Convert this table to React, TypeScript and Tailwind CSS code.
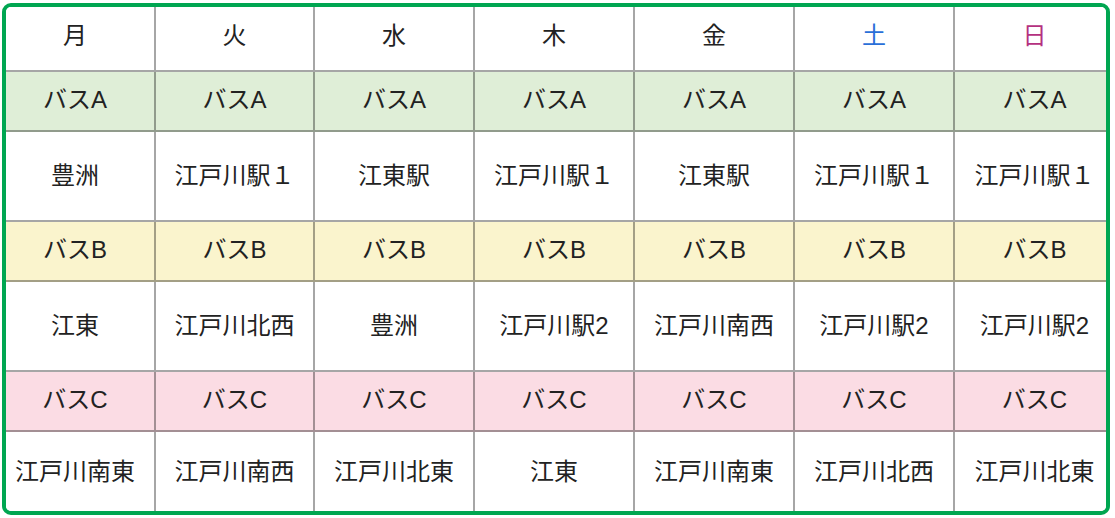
const days = [
  { label: "月", color: "text-[#222222]" },
  { label: "火", color: "text-[#222222]" },
  { label: "水", color: "text-[#222222]" },
  { label: "木", color: "text-[#222222]" },
  { label: "金", color: "text-[#222222]" },
  { label: "土", color: "text-[#2a6fd8]" },
  { label: "日", color: "text-[#b5317f]" },
];

type Row = { cells: string[]; bg: string; h: string };

const rows: Row[] = [
  { cells: days.map(() => "バスA"), bg: "bg-[#dfeed7]", h: "h-[60px]" },
  {
    cells: ["豊洲", "江戸川駅１", "江東駅", "江戸川駅１", "江東駅", "江戸川駅１", "江戸川駅１"],
    bg: "bg-white",
    h: "h-[90px]",
  },
  { cells: days.map(() => "バスB"), bg: "bg-[#faf4cd]", h: "h-[60px]" },
  {
    cells: ["江東", "江戸川北西", "豊洲", "江戸川駅2", "江戸川南西", "江戸川駅2", "江戸川駅2"],
    bg: "bg-white",
    h: "h-[90px]",
  },
  { cells: days.map(() => "バスC"), bg: "bg-[#fbdce4]", h: "h-[60px]" },
  {
    cells: ["江戸川南東", "江戸川南西", "江戸川北東", "江東", "江戸川南東", "江戸川北西", "江戸川北東"],
    bg: "bg-white",
    h: "h-[79px]",
  },
];

const edgePad = (col: number) => (col === 0 ? "pr-[10px]" : col === 6 ? "pl-[8px]" : "");

function Cell({
  children,
  col,
  last,
  className,
}: {
  children: React.ReactNode;
  col: number;
  last: boolean;
  className: string;
}) {
  return (
    <div
      className={`flex items-center justify-center border-black/35 ${col < 6 ? "border-r-2" : ""} ${
        last ? "" : "border-b-2"
      } ${edgePad(col)} ${className}`}
    >
      {children}
    </div>
  );
}

export default function App() {
  return (
    <div
      className="bg-white w-[1115px] h-[518px] pt-[3px] pl-[2px]"
      style={{ fontFamily: '"Liberation Sans", "Noto Sans CJK JP", sans-serif' }}
    >
      <div className="w-[1108px] h-[512px] rounded-[9px] border-4 border-[#00a651] overflow-hidden">
        <div className="grid grid-cols-[150px_159px_160px_160px_160px_160px_151px] text-[24px] leading-none text-[#222222]">
          {days.map((d, i) => (
            <Cell key={d.label} col={i} last={false} className={`h-[65px] pb-[6px] bg-white ${d.color}`}>
              {d.label}
            </Cell>
          ))}
          {rows.map((r, ri) =>
            r.cells.map((c, ci) => (
              <Cell
                key={`${ri}-${ci}`}
                col={ci}
                last={ri === rows.length - 1}
                className={`${r.bg} ${r.h} ${r.h === "h-[60px]" ? "pb-[3px]" : ""}`}
              >
                {c}
              </Cell>
            ))
          )}
        </div>
      </div>
    </div>
  );
}
